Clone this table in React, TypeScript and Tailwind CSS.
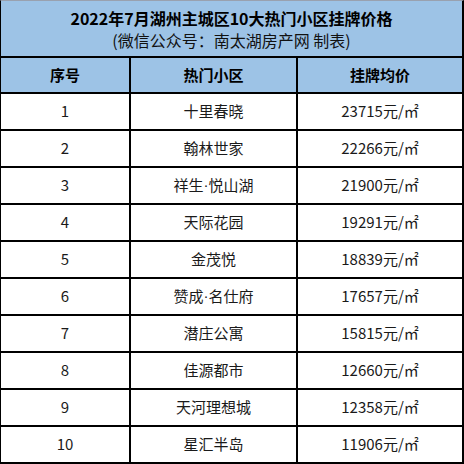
const rows = [
  ["1", "十里春晓", "23715"],
  ["2", "翰林世家", "22266"],
  ["3", "祥生·悦山湖", "21900"],
  ["4", "天际花园", "19291"],
  ["5", "金茂悦", "18839"],
  ["6", "赞成·名仕府", "17657"],
  ["7", "潜庄公寓", "15815"],
  ["8", "佳源都市", "12660"],
  ["9", "天河理想城", "12358"],
  ["10", "星汇半岛", "11906"],
];

// the middle dot should be narrow, as in a latin font
function Name({ text }: { text: string }) {
  const parts = text.split("·");
  if (parts.length === 1) return <>{text}</>;
  return (
    <>
      {parts[0]}
      <span style={{ fontFamily: '"Liberation Sans", sans-serif' }}>·</span>
      {parts[1]}
    </>
  );
}

export default function App() {
  return (
    <div
      className="w-[464px] h-[464px] bg-white text-black"
      style={{ fontFamily: '"Microsoft YaHei", "Noto Sans CJK SC", sans-serif' }}
    >
      <div className="w-[464px] h-[464px] flex flex-col border-l border-t border-t-gray-400 border-l-black border-r-2 border-r-black border-b-2 border-b-black">
        {/* title */}
        <div className="h-[57px] shrink-0 bg-[#9dc3e6] border-b-2 border-black flex flex-col items-center justify-center">
          <div className="text-[16px] font-bold leading-[22px]">2022年7月湖州主城区10大热门小区挂牌价格</div>
          <div className="text-[16px] leading-[22px] text-[#111]">(微信公众号：南太湖房产网 制表)</div>
        </div>

        {/* header row */}
        <div className="h-[36px] shrink-0 bg-[#9dc3e6] border-b-2 border-black flex text-[15px] font-bold">
          <div className="w-[130px] border-r-2 border-black flex items-center justify-center">序号</div>
          <div className="w-[167px] border-r-2 border-black flex items-center justify-center">热门小区</div>
          <div className="flex-1 flex items-center justify-center">挂牌均价</div>
        </div>

        {rows.map(([n, name, price], i) => (
          <div
            key={n}
            className={
              "flex-1 flex text-[15px] text-[#1a1a1a] " +
              (i < rows.length - 1 ? "border-b-2 border-black" : "")
            }
          >
            <div className="w-[130px] border-r-2 border-black flex items-center justify-center">{n}</div>
            <div className="w-[167px] border-r-2 border-black flex items-center justify-center">
              <Name text={name} />
            </div>
            <div className="flex-1 flex items-center justify-center">{price}元/㎡</div>
          </div>
        ))}
      </div>
    </div>
  );
}
